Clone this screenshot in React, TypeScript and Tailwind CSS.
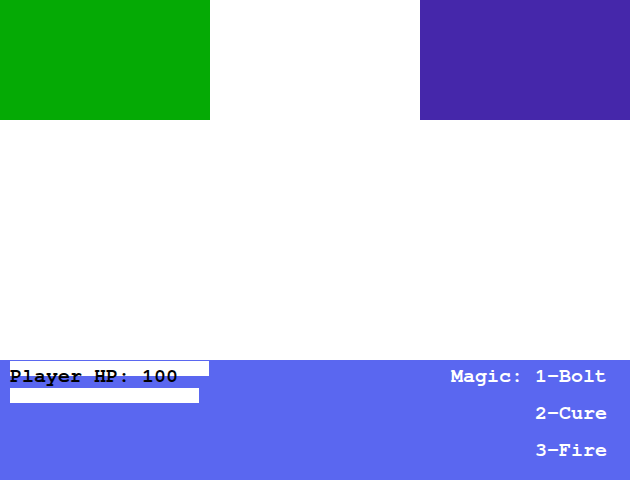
import React from "react";

export default function App() {
  const mono = { fontFamily: '"FreeMono", "Courier New", "Liberation Mono", monospace' };
  return (
    <div className="w-[630px] h-[480px] bg-white flex flex-col overflow-hidden" style={mono}>
      <div className="h-[360px] flex justify-between items-start">
        <div className="w-[210px] h-[120px] bg-[#05aa05]" />
        <div className="w-[210px] h-[120px] bg-[#4527aa]" />
      </div>
      <div className="h-[120px] bg-[#5a67f0] flex justify-between">
        <div className="pl-[10px] pt-[1px] flex flex-col">
          <div className="relative w-[199px] h-[15px] bg-white">
            <div className="absolute left-0 top-[5px] whitespace-pre text-[20px] leading-[20px] font-bold text-black">
              Player HP: 100
            </div>
          </div>
          <div className="mt-[12px] w-[189px] h-[15px] bg-white" />
        </div>
        <div className="pr-[23px] pt-[6px] flex flex-col items-end gap-[17px] text-[20px] leading-[20px] font-bold text-white whitespace-pre">
          <div>Magic: 1-Bolt</div>
          <div>2-Cure</div>
          <div>3-Fire</div>
        </div>
      </div>
    </div>
  );
}
